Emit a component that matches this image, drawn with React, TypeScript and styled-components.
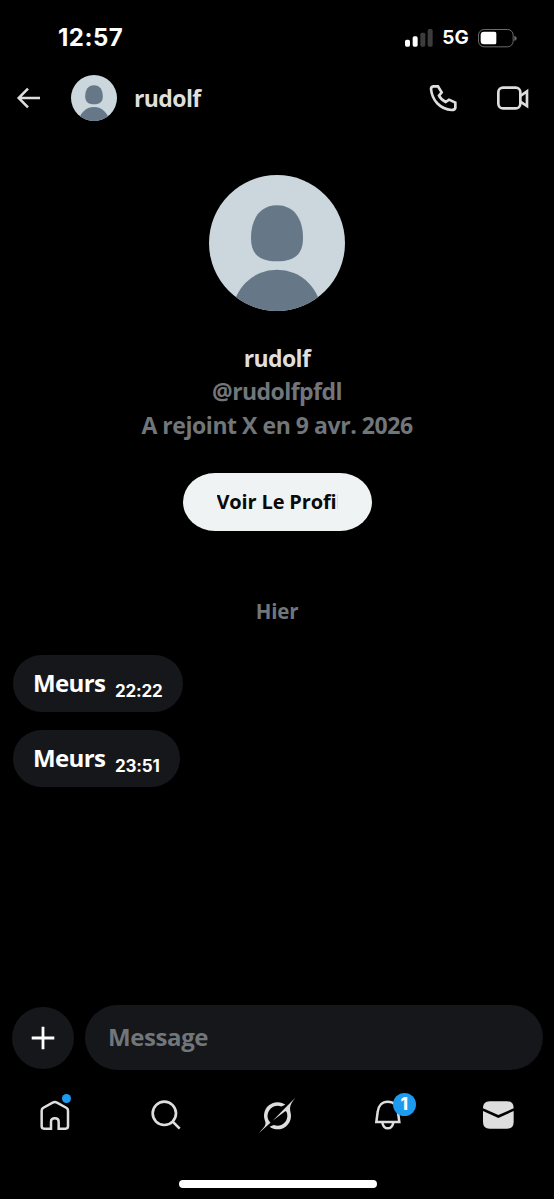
import React from "react";
import styled, { createGlobalStyle } from "styled-components";

const Global = createGlobalStyle`
  * { box-sizing: border-box; }
  body { margin: 0; background: #000; }
`;

const ink = "#dedede";
const muted = "#71767b";
const surface = "#15171a";
const blue = "#1d9bf0";

const Screen = styled.div`
  width: 554px;
  height: 1199px;
  background: #000;
  color: #dfdfdf;
  display: flex;
  flex-direction: column;
  overflow: hidden;
  font-family: "Open Sans", "Noto Sans", sans-serif;
  font-weight: 740;
`;

const Icon = styled.svg`
  display: block;
  flex: none;
  overflow: visible;
`;

const StatusBar = styled.div`
  height: 75px;
  padding: 0 37px 0 58px;
  display: flex;
  align-items: center;
  justify-content: space-between;
  color: #fff;
  font-family: Inter, sans-serif;
`;

const Clock = styled.span`
  font-size: 24px;
  line-height: 30px;
  letter-spacing: 0.5px;
`;

const StatusRight = styled.div`
  display: flex;
  align-items: center;
`;

const Network = styled.span`
  width: 45px;
  text-align: center;
  font-size: 19px;
  line-height: 24px;
  font-weight: 650;
`;

const Header = styled.header`
  height: 46px;
  padding: 0 24px 0 16px;
  display: flex;
  align-items: center;
`;

const HeaderName = styled.h1`
  margin: 0 auto 0 17px;
  font-size: 23px;
  line-height: 30px;
  padding-bottom: 1px;
  font-weight: inherit;
  letter-spacing: -0.6px;
`;

const HeaderAvatar = styled.div`
  margin-left: 30px;
`;

const Actions = styled.div`
  display: flex;
  align-items: center;
  gap: 38px;
`;

const Profile = styled.section`
  display: flex;
  flex-direction: column;
  align-items: center;
  padding-top: 54px;
`;

const ProfileText = styled.div`
  margin-top: 31px;
  display: flex;
  flex-direction: column;
  align-items: center;
`;

const Line = styled.div<{ $muted?: boolean; $track?: number }>`
  font-size: 23px;
  line-height: 33.3px;
  white-space: nowrap;
  color: ${(p) => (p.$muted ? muted : "#dfdfdf")};
  letter-spacing: ${(p) => p.$track ?? 0}px;
`;

const ProfileButton = styled.button`
  margin-top: 31px;
  width: 189px;
  height: 58px;
  padding: 0 0 0 34px;
  border: 0;
  border-radius: 32px / 29px;
  background: #eff3f4;
  color: #0a0a0b;
  font: inherit;
  font-size: 20px;
  text-align: left;
`;

const ButtonLabel = styled.span`
  display: block;
  width: 121px;
  overflow: hidden;
  white-space: nowrap;
  letter-spacing: -0.15px;
`;

const Day = styled.div`
  margin-top: 65px;
  font-size: 20.5px;
  line-height: 30px;
  text-align: center;
  letter-spacing: -0.2px;
  color: ${muted};
`;

const Messages = styled.div`
  margin-top: 29px;
  padding-left: 13px;
  flex: 1;
  display: flex;
  flex-direction: column;
  align-items: flex-start;
  gap: 18px;
`;

const Bubble = styled.div<{ $width: number }>`
  width: ${(p) => p.$width}px;
  height: 57px;
  padding: 0 20px;
  border-radius: 29px;
  background: ${surface};
  color: #fff;
  display: flex;
  align-items: center;
`;

const Body = styled.span`
  width: 82px;
  font-size: 24px;
  line-height: 32px;
  letter-spacing: -0.6px;
`;

const Time = styled.time`
  padding-top: 15px;
  font-family: Inter, "Noto Sans", sans-serif;
  font-size: 17px;
  line-height: 22px;
  font-weight: 700;
  letter-spacing: -0.2px;
`;

const Composer = styled.div`
  height: 65px;
  padding: 0 11px 0 12px;
  display: flex;
  align-items: center;
  gap: 11px;
`;

const AddButton = styled.button`
  width: 62px;
  height: 62px;
  padding: 0;
  border: 0;
  border-radius: 50%;
  background: ${surface};
  display: grid;
  place-items: center;
`;

const Field = styled.div`
  flex: 1;
  height: 65px;
  border-radius: 33px;
  padding: 0 0 2px 23px;
  background: ${surface};
  color: ${muted};
  display: flex;
  align-items: center;
  font-size: 24px;
  letter-spacing: -0.4px;
`;

const TabBar = styled.nav`
  height: 90px;
  display: grid;
  grid-template-columns: repeat(5, 1fr);
  justify-items: center;
  align-items: center;
`;

const Tab = styled.div`
  position: relative;
`;

const Dot = styled.span`
  position: absolute;
  top: -6.5px;
  right: -1px;
  width: 9px;
  height: 9px;
  border-radius: 50%;
  background: ${blue};
`;

const Badge = styled.span`
  position: absolute;
  top: -7px;
  right: -14px;
  width: 23px;
  height: 23px;
  border-radius: 50%;
  background: ${blue};
  color: #fff;
  text-align: center;
  font: 800 17px/23px Inter, sans-serif;
`;

const HomeIndicator = styled.div`
  width: 198px;
  height: 8px;
  margin: 20px auto 11px 178.5px;
  flex: none;
  border-radius: 4px;
  background: #fff;
`;

const Avatar = ({ size }: { size: number }) => (
  <Icon width={size} height={size} viewBox="0 0 408 408">
    <defs>
      <clipPath id={`avatar-${size}`}>
        <circle cx="204" cy="204" r="204" />
      </clipPath>
    </defs>
    <g clipPath={`url(#avatar-${size})`}>
      <rect width="408" height="408" fill="#ccd6dd" />
      <path
        d="M204 91C255 91 282 132 282 188C282 238 257 259 204 259C151 259 126 238 126 188C126 132 153 91 204 91Z"
        fill="#667788"
      />
      <circle cx="204" cy="417" r="133" fill="#667788" />
    </g>
  </Icon>
);

const strokes = { fill: "none", stroke: ink, strokeWidth: 8 };

export default function App() {
  return (
    <Screen>
      <Global />
      <StatusBar>
        <Clock>12:57</Clock>
        <StatusRight>
          <Icon width="28" height="18" viewBox="0 0 84 54" fill="#fff">
            <rect y="32" width="15" height="21" rx="5" />
            <rect x="23" y="22" width="15" height="31" rx="5" />
            <rect x="46" y="11" width="15" height="42" rx="5" fill="#3c3c3c" />
            <rect x="68" width="15" height="53" rx="5" fill="#3c3c3c" />
          </Icon>
          <Network>5G</Network>
          <Icon width="39" height="18" viewBox="0 0 117 54">
            <rect x="1.5" y="1.5" width="104" height="52" rx="17" fill="none" stroke="#6c6c6c" strokeWidth="3" />
            <path d="M18 8H50Q55 8 55 13V41Q55 46 50 46H18Q8 46 8 36V18Q8 8 18 8Z" fill="#fff" />
            <path d="M109 20Q116 22 116 28Q116 34 109 36Z" fill="#6c6c6c" />
          </Icon>
        </StatusRight>
      </StatusBar>

      <Header>
        <Icon width="25" height="24" viewBox="0 0 75 72">
          <path d="M72 36H8M36 8L8 36L36 64" {...strokes} strokeWidth={7.5} />
        </Icon>
        <HeaderAvatar>
          <Avatar size={46} />
        </HeaderAvatar>
        <HeaderName>rudolf</HeaderName>
        <Actions>
          <Icon width="30" height="30" viewBox="115 218 90 90">
            <path
              d="M131 228H145L156 246L148 256Q154 268 168 275L178 268L197 277V293Q195 299 186 299C152 297 127 270 124 236Q124 229 131 228Z"
              {...strokes}
            />
          </Icon>
          <Icon width="34" height="30" viewBox="319 218 102 90">
            <rect x="326" y="232" width="66" height="62" rx="14" {...strokes} />
            <path d="M392 257L412 243V287L392 274" {...strokes} />
          </Icon>
        </Actions>
      </Header>

      <Profile>
        <Avatar size={136} />
        <ProfileText>
          <Line $track={-0.6}>rudolf</Line>
          <Line $muted $track={-0.55}>@rudolfpfdl</Line>
          <Line $muted $track={-0.45}>A rejoint X en 9 avr. 2026</Line>
        </ProfileText>
        <ProfileButton>
          <ButtonLabel>Voir Le Profil</ButtonLabel>
        </ProfileButton>
      </Profile>

      <Day>Hier</Day>
      <Messages>
        <Bubble $width={170}>
          <Body>Meurs</Body>
          <Time>22:22</Time>
        </Bubble>
        <Bubble $width={167}>
          <Body>Meurs</Body>
          <Time>23:51</Time>
        </Bubble>
      </Messages>

      <Composer>
        <AddButton aria-label="+">
          <Icon width="24" height="24" viewBox="0 0 24 24">
            <path d="M12 .7V23.3M.7 12H23.3" stroke="#fff" strokeWidth="2.8" />
          </Icon>
        </AddButton>
        <Field>Message</Field>
      </Composer>

      <TabBar>
        <Tab>
          <Icon width="30" height="30" viewBox="122 330 90 90">
            <path
              d="M127 362Q127 357 131 354L160 338Q167 334 173 338L202 354Q206 357 206 362V409Q206 416 199 416H178V395Q178 385 167 385Q155 385 155 395V416H134Q127 416 127 409Z"
              {...strokes}
              strokeWidth={7.5}
            />
          </Icon>
          <Dot />
        </Tab>
        <Tab>
          <Icon width="30" height="30" viewBox="453 331 90 90">
            <circle cx="493" cy="371" r="35" {...strokes} />
            <path d="M518 396L539 417" {...strokes} />
          </Icon>
        </Tab>
        <Tab>
          <Icon width="36" height="35" viewBox="0 0 33 32" fill={ink}>
            <path d="M12.745 20.54l10.97-8.19c.539-.4 1.307-.244 1.564.38 1.349 3.288.746 7.241-1.938 9.955-2.683 2.714-6.417 3.31-9.83 1.954l-3.728 1.745c5.347 3.697 11.84 2.782 15.898-1.324 3.219-3.255 4.216-7.692 3.284-11.693l.008.009c-1.351-5.878.332-8.227 3.782-13.031L33 0l-4.54 4.59v-.014L12.743 20.544m-2.263 1.987c-3.837-3.707-3.175-9.446.1-12.755 2.42-2.449 6.388-3.448 9.852-1.979l3.72-1.737c-.67-.49-1.53-1.017-2.515-1.387-4.455-1.854-9.789-.931-13.41 2.728-3.483 3.523-4.579 8.94-2.697 13.561 1.405 3.454-.899 5.898-3.22 8.364C1.49 30.2.666 31.074 0 32l10.478-9.466" />
          </Icon>
        </Tab>
        <Tab>
          <Icon width="28" height="30" viewBox="402 62 84 90">
            <path d="M409 128L413 98C415 78 427 67 443 67C460 67 472 78 474 98L478 128Z" {...strokes} strokeWidth={7.5} />
            <path d="M427 130Q431 147 443 147Q456 147 460 130" {...strokes} strokeWidth={7.5} />
          </Icon>
          <Badge>1</Badge>
        </Tab>
        <Tab>
          <Icon width="31" height="28" viewBox="729 65 93 84" fill={ink}>
            <path d="M729 86Q729 66 749 66H801Q821 66 821 86V87L775 107L729 87Z" />
            <path d="M729 95L775 116L821 95V128Q821 148 801 148H749Q729 148 729 128Z" />
          </Icon>
        </Tab>
      </TabBar>
      <HomeIndicator />
    </Screen>
  );
}
